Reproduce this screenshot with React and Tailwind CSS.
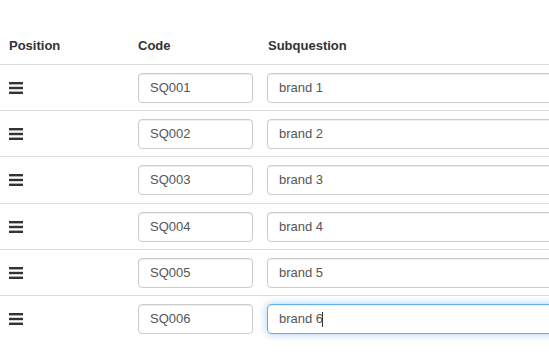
import React from 'react';

const rows = [
  { code: 'SQ001', text: 'brand 1', h: 'h-[46px]' },
  { code: 'SQ002', text: 'brand 2', h: 'h-[46px]' },
  { code: 'SQ003', text: 'brand 3', h: 'h-[47px]' },
  { code: 'SQ004', text: 'brand 4', h: 'h-[46px]' },
  { code: 'SQ005', text: 'brand 5', h: 'h-[46px]' },
  { code: 'SQ006', text: 'brand 6', h: 'h-[46px]', focused: true },
];

function Bars() {
  return (
    <svg width="14" height="12" viewBox="0 0 14 12" className="block">
      <rect x="0" y="0" width="14" height="2.4" fill="#333" />
      <rect x="0" y="4.8" width="14" height="2.4" fill="#333" />
      <rect x="0" y="9.6" width="14" height="2.4" fill="#333" />
    </svg>
  );
}

export default function App() {
  return (
    <div className="w-[549px] h-[352px] overflow-hidden bg-white text-[13px] text-[#333]" style={{ fontFamily: '"Liberation Sans", Arial, sans-serif' }}>
      <div className="w-[600px] pt-[28px]">
        <div className="grid grid-cols-[130px_130px_1fr] h-[37px] items-center border-b border-[#ddd] font-bold">
          <div className="pl-[9px]">Position</div>
          <div className="pl-[8px]">Code</div>
          <div className="pl-[8px]">Subquestion</div>
        </div>
        {rows.map((r, i) => (
          <div key={r.code} className={`grid grid-cols-[130px_130px_1fr] ${r.h} items-center ${i < rows.length - 1 ? 'border-b border-[#ddd]' : ''}`}>
            <div className="pl-[9px]"><Bars /></div>
            <div className="pl-[8px] pr-[8px]">
              <div className="h-[30px] w-[115px] border border-[#ccc] rounded-[4px] flex items-center pl-[11px] text-[#555] shadow-[inset_0_1px_1px_rgba(0,0,0,0.075)]">{r.code}</div>
            </div>
            <div className="pl-[7px]">
              <div className={`h-[30px] w-full flex items-center pl-[11px] rounded-[4px] text-[#555] border ${r.focused ? 'border-[#66afe9] shadow-[inset_0_1px_1px_rgba(0,0,0,0.075),0_0_8px_rgba(102,175,233,0.6)]' : 'border-[#ccc] shadow-[inset_0_1px_1px_rgba(0,0,0,0.075)]'}`}>
                {r.text}
                {r.focused && <span className="inline-block w-px h-[15px] bg-[#333] ml-[-1px]" />}
              </div>
            </div>
          </div>
        ))}
      </div>
    </div>
  );
}
